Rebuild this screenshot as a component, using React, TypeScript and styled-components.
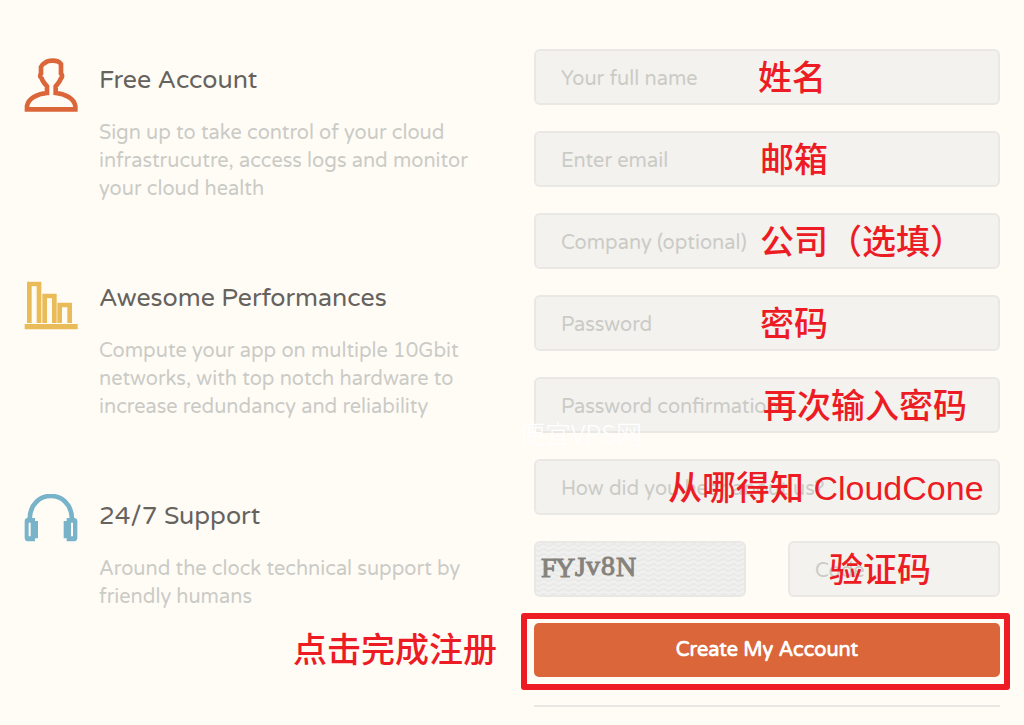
import React from "react";
import styled, { createGlobalStyle } from "styled-components";

const GlobalStyle = createGlobalStyle`
  * { box-sizing: border-box; }
  body {
    margin: 0;
    background: #fffcf6;
    font-family: "Varela Round", "Noto Sans", "Noto Sans CJK SC", sans-serif;
  }
`;

const Page = styled.main`
  position: relative;
  display: grid;
  grid-template-columns: 1fr 1fr;
  column-gap: 44px;
  padding: 49px 24px 18px;
`;

const Features = styled.div`
  display: flex;
  flex-direction: column;
  gap: 73px;
  padding-top: 9px;
`;

const Feature = styled.section`
  display: grid;
  grid-template-columns: 55px 1fr;
  column-gap: 20px;
`;

const FeatureIcon = styled.svg`
  width: 54px;
  height: 54px;
`;

const FeatureTitle = styled.h2`
  margin: 5px 0 22px;
  font-size: 25px;
  font-weight: 400;
  line-height: 34px;
  color: #66625e;
`;

const FeatureText = styled.p`
  margin: 0;
  font-size: 20px;
  line-height: 28px;
  color: #cbcbc6;
`;

const Form = styled.form`
  display: flex;
  flex-direction: column;
  gap: 26px;
`;

const Field = styled.div`
  position: relative;
`;

const Input = styled.input`
  display: block;
  width: 100%;
  height: 56px;
  padding: 3px 25px 0;
  border: 2px solid #e9e8e5;
  border-radius: 6px;
  background: #f3f2ef;
  font: 400 20px "Varela Round", "Noto Sans", sans-serif;
  color: #66625e;
  &::placeholder {
    color: #cbcbc6;
    opacity: 1;
  }
`;

const Note = styled.label<{ $left: number }>`
  position: absolute;
  left: ${(p) => p.$left}px;
  top: 5px;
  font: 500 34px/48px "Liberation Sans", "Noto Sans CJK SC", sans-serif;
  color: #ed1c24;
  white-space: nowrap;
`;

const SubmitNote = styled(Note)`
  left: auto;
  right: 100%;
  top: 3px;
  margin-right: 37px;
`;

const CodeRow = styled.div`
  display: grid;
  grid-template-columns: 1fr 1fr;
  column-gap: 42px;
`;

const Captcha = styled.svg`
  display: block;
  width: 100%;
  height: 56px;
  border: 2px solid #e9e8e5;
  border-radius: 6px;
  background: #f0f0ef;
`;

const SubmitArea = styled.div`
  position: relative;
`;

const Submit = styled.button`
  display: block;
  width: 100%;
  height: 54px;
  border: 0;
  border-radius: 5px;
  background: #db6639;
  font: 700 20px "Varela Round", "Noto Sans", sans-serif;
  color: #fff;
`;

const Highlight = styled.div`
  position: absolute;
  inset: -10px -10px -13px -13px;
  border: 6px solid #ed1c24;
  border-radius: 3px;
  pointer-events: none;
`;

const Rule = styled.hr`
  width: 100%;
  margin: 2px 0 0;
  border: 0;
  border-top: 2px solid #e9e8e5;
`;

const Watermark = styled.span`
  position: absolute;
  left: -15px;
  top: 38px;
  font: 300 26px/36px "Noto Sans CJK SC", sans-serif;
  color: #fff;
  white-space: nowrap;
  pointer-events: none;
`;

const PersonIcon = () => (
  <FeatureIcon viewBox="43 39 162 162" aria-hidden="true">
    <path
      d="M52 193V183C56 160 82 147 112 144V124C104 115 98 108 96 100C90 96 90 91 94 86V66C97 57 103 56 107 53C113 47 119 47 129 47C140 47 149 50 154 57V86C159 91 158 96 154 100C151 108 146 115 138 124V144C167 147 193 160 197 183V193Z M112 143V151M138 143V151"
      fill="none"
      stroke="#db6639"
      strokeWidth="14"
    />
  </FeatureIcon>
);

const ChartIcon = () => (
  <FeatureIcon viewBox="43 18 162 162" aria-hidden="true">
    <path
      d="M59 159V42H88V159M105 159V78H134V159M150 159V105H180V159"
      fill="none"
      stroke="#eabb59"
      strokeWidth="14"
    />
    <path d="M45 162H204V178H45Z" fill="#eabb59" />
  </FeatureIcon>
);

const HeadphonesIcon = () => (
  <FeatureIcon viewBox="43 41 162 162" aria-hidden="true">
    <path d="M60 116C62 24 185 24 187 116" fill="none" stroke="#78b3ca" strokeWidth="14" />
    <path
      fillRule="evenodd"
      fill="#78b3ca"
      d="M53 113H76V122H85V174H76V183H57Q45 183 45 172V122Q45 114 53 113ZM57 127V168H63V127ZM194 113H171V122H162V174H171V183H191Q203 183 203 172V122Q203 114 194 113ZM184 127V168H190V127Z"
    />
  </FeatureIcon>
);

const features = [
  {
    icon: <PersonIcon />,
    title: "Free Account",
    text: "Sign up to take control of your cloud infrastrucutre, access logs and monitor your cloud health",
  },
  {
    icon: <ChartIcon />,
    title: "Awesome Performances",
    text: "Compute your app on multiple 10Gbit networks, with top notch hardware to increase redundancy and reliability",
  },
  {
    icon: <HeadphonesIcon />,
    title: "24/7 Support",
    text: "Around the clock technical support by friendly humans",
  },
];

const fields = [
  { id: "name", type: "text", placeholder: "Your full name", note: "姓名", left: 224 },
  { id: "email", type: "email", placeholder: "Enter email", note: "邮箱", left: 226 },
  { id: "company", type: "text", placeholder: "Company (optional)", note: "公司（选填）", left: 226 },
  { id: "password", type: "password", placeholder: "Password", note: "密码", left: 226 },
  { id: "confirm", type: "password", placeholder: "Password confirmation", note: "再次输入密码", left: 229 },
  { id: "source", type: "text", placeholder: "How did you hear about us?", note: "从哪得知 CloudCone", left: 134 },
];

export default function App() {
  return (
    <>
      <GlobalStyle />
      <Page>
        <Features>
          {features.map((f) => (
            <Feature key={f.title}>
              {f.icon}
              <div>
                <FeatureTitle>{f.title}</FeatureTitle>
                <FeatureText>{f.text}</FeatureText>
              </div>
            </Feature>
          ))}
        </Features>
        <Form onSubmit={(e) => e.preventDefault()}>
          {fields.map((f) => (
            <Field key={f.id}>
              <Input id={f.id} type={f.type} placeholder={f.placeholder} />
              <Note htmlFor={f.id} $left={f.left}>{f.note}</Note>
              {f.id === "confirm" && <Watermark>便宜VPS网</Watermark>}
            </Field>
          ))}
          <CodeRow>
            <Captcha role="img" aria-label="Captcha">
              <defs>
                <pattern id="waves" width="10" height="5" patternUnits="userSpaceOnUse">
                  <path d="M0 2Q2.500 4 5 2T10 2" fill="none" stroke="#e9e9e9" strokeWidth="2" />
                </pattern>
              </defs>
              <rect width="100%" height="100%" fill="url(#waves)" />
              <text
                x="5 19 39 50 65 80"
                y="34 34 33 32 32 33"
                fontFamily="Liberation Serif"
                fontSize="28"
                fill="#85827b"
                stroke="#85827b"
                strokeWidth="1"
              >
                FYJv8N
              </text>
            </Captcha>
            <Field>
              <Input id="code" type="text" placeholder="Code" />
              <Note htmlFor="code" $left={41}>验证码</Note>
            </Field>
          </CodeRow>
          <SubmitArea>
            <Submit id="submit" type="submit">Create My Account</Submit>
            <Highlight />
            <SubmitNote htmlFor="submit" $left={0}>点击完成注册</SubmitNote>
          </SubmitArea>
          <Rule />
        </Form>
      </Page>
    </>
  );
}
